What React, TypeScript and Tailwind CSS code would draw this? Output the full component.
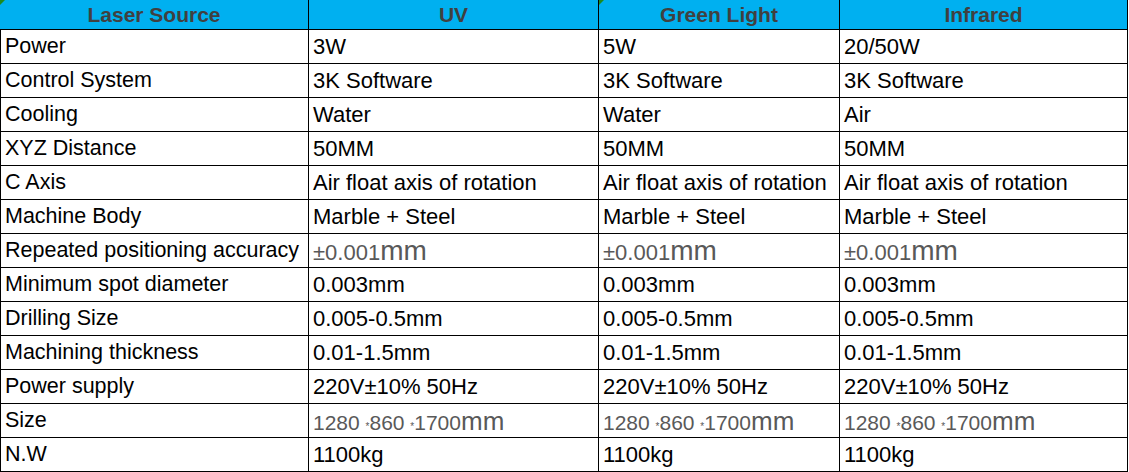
import React from 'react';

type Cell = string | 'acc' | 'size';

const headers = ['Laser Source', 'UV', 'Green Light', 'Infrared'];

const rows: [string, Cell, Cell, Cell][] = [
  ['Power', '3W', '5W', '20/50W'],
  ['Control System', '3K Software', '3K Software', '3K Software'],
  ['Cooling', 'Water', 'Water', 'Air'],
  ['XYZ Distance', '50MM', '50MM', '50MM'],
  ['C Axis', 'Air float axis of rotation', 'Air float axis of rotation', 'Air float axis of rotation'],
  ['Machine Body', 'Marble + Steel', 'Marble + Steel', 'Marble + Steel'],
  ['Repeated positioning accuracy', 'acc', 'acc', 'acc'],
  ['Minimum spot diameter', '0.003mm', '0.003mm', '0.003mm'],
  ['Drilling Size', '0.005-0.5mm', '0.005-0.5mm', '0.005-0.5mm'],
  ['Machining thickness', '0.01-1.5mm', '0.01-1.5mm', '0.01-1.5mm'],
  ['Power supply', '220V±10% 50Hz', '220V±10% 50Hz', '220V±10% 50Hz'],
  ['Size', 'size', 'size', 'size'],
  ['N.W', '1100kg', '1100kg', '1100kg'],
];

const Triangle = () => (
  <span className="absolute left-0 top-0 h-0 w-0 border-t-[5px] border-r-[5px] border-t-[#1e8a1e] border-r-transparent" />
);

const renderValue = (v: Cell) => {
  if (v === 'acc') {
    return (
      <span className="text-[#595959]">
        ±0.001<span className="text-[28px]">mm</span>
      </span>
    );
  }
  if (v === 'size') {
    return (
      <span className="text-[21px] text-[#595959]">
        1280 <span className="text-[10px]">*</span>860 <span className="text-[10px]">*</span>1700
        <span className="text-[26px]">mm</span>
      </span>
    );
  }
  return v;
};

export default function App() {
  return (
    <div className="w-[1129px] h-[472px] bg-white font-['Liberation_Sans',Arial,sans-serif] text-[22px] text-black">
      <div className="grid grid-cols-[309px_290px_241px_288px]">
        {headers.map((h, i) => (
          <div
            key={h}
            className="relative flex h-[30px] items-center justify-center border-r border-b border-black bg-[#00b0f0] text-[21px] font-bold text-[#404040]"
          >
            {(i === 0 || i === 2) && <Triangle />}
            {h}
          </div>
        ))}
        {rows.map((r) =>
          r.map((c, i) => (
            <div
              key={r[0] + i}
              className={`flex h-[34px] items-center whitespace-nowrap border-r border-b border-black pl-1 leading-none ${
                i === 0 ? 'border-l text-[21.5px]' : ''
              }`}
            >
              {renderValue(c)}
            </div>
          ))
        )}
      </div>
    </div>
  );
}
